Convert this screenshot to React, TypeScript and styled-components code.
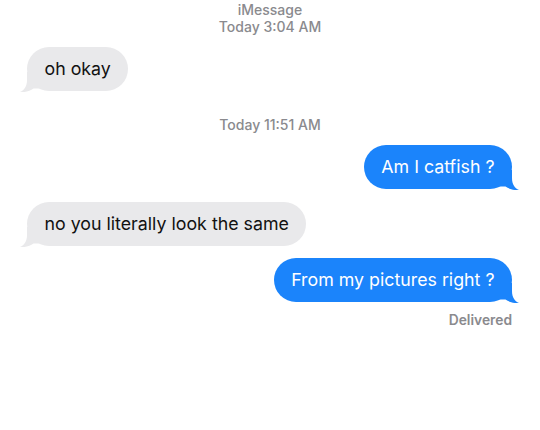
import React from "react";
import styled, { createGlobalStyle } from "styled-components";

const GlobalStyle = createGlobalStyle`
  html, body { margin: 0; padding: 0; background: #ffffff; }
  body { font-family: Inter, "Liberation Sans", Arial, sans-serif; -webkit-font-smoothing: antialiased; }
`;

const Screen = styled.div`
  width: 540px;
  height: 430px;
  background: #ffffff;
  display: flex;
  flex-direction: column;
  padding-top: 1px;
  box-sizing: border-box;
`;

const Meta = styled.div<{ $top?: number }>`
  text-align: center;
  color: #8a8a8e;
  font-size: 14px;
  font-weight: 500;
  line-height: 17px;
  margin-top: ${(p) => p.$top ?? 0}px;
`;

const Row = styled.div<{ $out?: boolean; $top: number }>`
  display: flex;
  justify-content: ${(p) => (p.$out ? "flex-end" : "flex-start")};
  padding: 0 28px 0 27px;
  margin-top: ${(p) => p.$top}px;
`;

const Bubble = styled.div<{ $out?: boolean }>`
  position: relative;
  height: 44px;
  line-height: 44px;
  padding: 0 17.5px;
  border-radius: 22px;
  font-size: 17.8px;
  white-space: nowrap;
  background: ${(p) => (p.$out ? "#1b84fb" : "#e9e9eb")};
  color: ${(p) => (p.$out ? "#ffffff" : "#111111")};
`;

const Tail = styled.svg<{ $out?: boolean }>`
  position: absolute;
  bottom: -1px;
  width: 20px;
  height: 20px;
  ${(p) => (p.$out ? "right: -7px; transform: scaleX(-1);" : "left: -7px;")}
`;

const Status = styled.div`
  display: flex;
  justify-content: flex-end;
  padding-right: 28px;
  margin-top: 10px;
  color: #8a8a8e;
  font-size: 13.8px;
  font-weight: 600;
  line-height: 16px;
`;

function Message({ out, text, top }: { out?: boolean; text: string; top: number }) {
  const fill = out ? "#1b84fb" : "#e9e9eb";
  return (
    <Row $out={out} $top={top}>
      <Bubble $out={out}>
        <Tail $out={out} viewBox="0 0 20 20">
          <path
            d="M7 0 L7 8 C7 14 4.5 18 0 20 C5 20.6 10 19 13.5 16.5 L20 16.5 L20 0 Z"
            fill={fill}
          />
        </Tail>
        {text}
      </Bubble>
    </Row>
  );
}

export default function App() {
  return (
    <>
      <GlobalStyle />
      <Screen>
        <Meta>iMessage</Meta>
        <Meta>Today 3:04 AM</Meta>
        <Message text="oh okay" top={12} />
        <Meta $top={25}>Today 11:51 AM</Meta>
        <Message out text="Am I catfish ?" top={12} />
        <Message text="no you literally look the same" top={13} />
        <Message out text="From my pictures right ?" top={12} />
        <Status>Delivered</Status>
      </Screen>
    </>
  );
}
